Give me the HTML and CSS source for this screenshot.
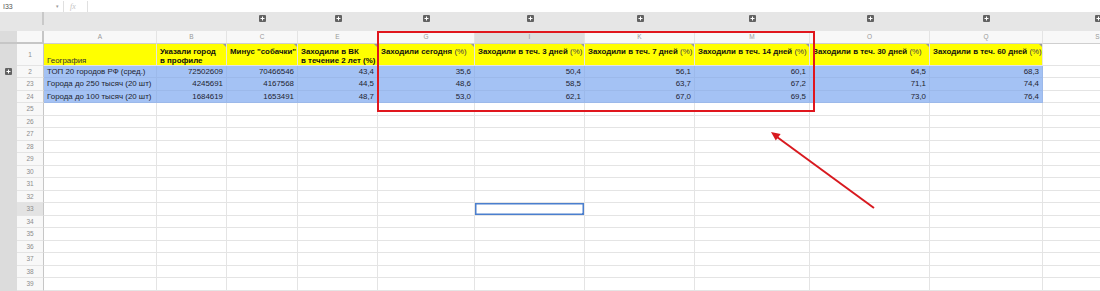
FILE: index.html
```html
<!DOCTYPE html>
<html>
<head>
    <title>Статистика по городам</title>
    <link rel="stylesheet" href="styles.css">
</head>
<body>
<div class="app">
    <div class="formula-bar">
        <div class="name-box">I33</div>
        <div class="name-arrow">&#9662;</div>
        <div class="fx-sep"></div>
        <div class="fx">fx</div>
        <div class="fx-sep"></div>
    </div>

    <div id="sheet">
        <div class="row band">
            <div class="corner"></div>
            <div></div>
            <div></div>
            <div><svg class="plus" width="7" height="7"><rect width="7" height="7" rx="1" fill="#626262"/><path d="M3.5 1.5v4M1.5 3.5h4" stroke="#fff" stroke-width="1"/></svg></div>
            <div><svg class="plus" width="7" height="7"><rect width="7" height="7" rx="1" fill="#626262"/><path d="M3.5 1.5v4M1.5 3.5h4" stroke="#fff" stroke-width="1"/></svg></div>
            <div><svg class="plus" width="7" height="7"><rect width="7" height="7" rx="1" fill="#626262"/><path d="M3.5 1.5v4M1.5 3.5h4" stroke="#fff" stroke-width="1"/></svg></div>
            <div><svg class="plus" width="7" height="7"><rect width="7" height="7" rx="1" fill="#626262"/><path d="M3.5 1.5v4M1.5 3.5h4" stroke="#fff" stroke-width="1"/></svg></div>
            <div><svg class="plus" width="7" height="7"><rect width="7" height="7" rx="1" fill="#626262"/><path d="M3.5 1.5v4M1.5 3.5h4" stroke="#fff" stroke-width="1"/></svg></div>
            <div><svg class="plus" width="7" height="7"><rect width="7" height="7" rx="1" fill="#626262"/><path d="M3.5 1.5v4M1.5 3.5h4" stroke="#fff" stroke-width="1"/></svg></div>
            <div><svg class="plus" width="7" height="7"><rect width="7" height="7" rx="1" fill="#626262"/><path d="M3.5 1.5v4M1.5 3.5h4" stroke="#fff" stroke-width="1"/></svg></div>
            <div><svg class="plus" width="7" height="7"><rect width="7" height="7" rx="1" fill="#626262"/><path d="M3.5 1.5v4M1.5 3.5h4" stroke="#fff" stroke-width="1"/></svg></div>
            <div><svg class="plus" width="7" height="7"><rect width="7" height="7" rx="1" fill="#626262"/><path d="M3.5 1.5v4M1.5 3.5h4" stroke="#fff" stroke-width="1"/></svg></div>
            <div></div>
        </div>

        <div class="row letters">
            <div class="gut"></div>
            <div class="rh"></div>
            <div>A</div>
            <div>B</div>
            <div>C</div>
            <div>E</div>
            <div>G</div>
            <div class="col-sel">I</div>
            <div>K</div>
            <div>M</div>
            <div>O</div>
            <div>Q</div>
            <div>S</div>
        </div>

        <div class="row head">
            <div class="gut"></div>
            <div class="rh">1</div>
            <div class="y geo">География</div>
            <div class="y note">Указали город<br>в профиле</div>
            <div class="y note">Минус "собачки"</div>
            <div class="y note">Заходили в ВК<br>в течение 2 лет (%)</div>
            <div class="y note">Заходили сегодня <span class="pct">(%)</span></div>
            <div class="y note">Заходили в теч. 3 дней <span class="pct">(%)</span></div>
            <div class="y note">Заходили в теч. 7 дней <span class="pct">(%)</span></div>
            <div class="y note">Заходили в теч. 14 дней <span class="pct">(%)</span></div>
            <div class="y note">Заходили в теч. 30 дней <span class="pct">(%)</span></div>
            <div class="y note">Заходили в теч. 60 дней <span class="pct">(%)</span></div>
            <div></div>
        </div>

        <div class="row">
            <div class="gut"><svg class="plus" width="7" height="7"><rect width="7" height="7" rx="1" fill="#626262"/><path d="M3.5 1.5v4M1.5 3.5h4" stroke="#fff" stroke-width="1"/></svg></div>
            <div class="rh">2</div>
            <div class="b">ТОП 20 городов РФ (сред.)</div>
            <div class="b num">72502609</div>
            <div class="b num">70466546</div>
            <div class="b num">43,4</div>
            <div class="b num">35,6</div>
            <div class="b num">50,4</div>
            <div class="b num">56,1</div>
            <div class="b num">60,1</div>
            <div class="b num">64,5</div>
            <div class="b num">68,3</div>
            <div></div>
        </div>

        <div class="row">
            <div class="gut"></div>
            <div class="rh">23</div>
            <div class="b">Города до 250 тысяч (20 шт)</div>
            <div class="b num">4245691</div>
            <div class="b num">4167568</div>
            <div class="b num">44,5</div>
            <div class="b num">48,6</div>
            <div class="b num">58,5</div>
            <div class="b num">63,7</div>
            <div class="b num">67,2</div>
            <div class="b num">71,1</div>
            <div class="b num">74,4</div>
            <div></div>
        </div>

        <div class="row">
            <div class="gut"></div>
            <div class="rh">24</div>
            <div class="b">Города до 100 тысяч (20 шт)</div>
            <div class="b num">1684619</div>
            <div class="b num">1653491</div>
            <div class="b num">48,7</div>
            <div class="b num">53,0</div>
            <div class="b num">62,1</div>
            <div class="b num">67,0</div>
            <div class="b num">69,5</div>
            <div class="b num">73,0</div>
            <div class="b num">76,4</div>
            <div></div>
        </div>
    </div>

    <div class="highlight"></div>
    <svg class="arrow" width="1100" height="291">
        <line x1="874" y1="208" x2="777" y2="137" stroke="#d8191f" stroke-width="2"/>
        <polygon points="771,132 780.6,134.1 775.8,140.5" fill="#d8191f"/>
    </svg>
</div>

<script>
    const sheet = document.getElementById("sheet");

    // empty rows 25..39, cell I33 is the active one
    for (let r = 25; r <= 39; r++) {
        const row = document.createElement("div");
        row.className = "row";
        let html = '<div class="gut"></div>';
        html += '<div class="rh' + (r === 33 ? ' row-sel' : '') + '">' + r + '</div>';
        for (let c = 0; c < 11; c++) {
            html += (r === 33 && c === 5) ? '<div class="sel"></div>' : '<div></div>';
        }
        row.innerHTML = html;
        sheet.appendChild(row);
    }
</script>
</body>
</html>
```

FILE: styles.css
```css
body {
    margin: 0;
    font-family: "Liberation Sans", Arial, sans-serif;
    background-color: #fff;
    overflow: hidden;
}

.app {
    position: relative;
    width: 1100px;
    height: 291px;
    overflow: hidden;
}

.formula-bar {
    height: 12px;
    display: flex;
    align-items: center;
    font-size: 7px;
    color: #555;
}

.name-box {
    width: 53px;
    padding-left: 3px;
}

.name-arrow {
    width: 7px;
    font-size: 5px;
    color: #999;
}

.fx-sep {
    width: 1px;
    height: 11px;
    background-color: #e0e0e0;
}

.fx {
    width: 17px;
    padding-left: 6px;
    font-family: "Liberation Serif", serif;
    font-style: italic;
    font-size: 8px;
    color: #c4c4c4;
}

#sheet {
    width: 1200px;
}

.row {
    display: grid;
    grid-template-columns: 17px 27px 113px 70px 71px 80px 97px 110px 110px 115px 120px 113px 110px;
    height: 12.5px;
}

.row > div {
    box-sizing: border-box;
    border-right: 1px solid #e4e4e4;
    border-bottom: 1px solid #e4e4e4;
    padding: 0 3px;
    overflow: hidden;
    white-space: nowrap;
    font-size: 7.9px;
    line-height: 11.5px;
    color: #222;
}

.row > .gut {
    background-color: #dcdcdc;
    border: none;
    padding: 0;
    display: flex;
    align-items: center;
    justify-content: center;
}

.row > .rh {
    background-color: #f8f8f8;
    border-right: 1px solid #c6c6c6;
    padding: 0;
    text-align: center;
    font-size: 6.5px;
    color: #8c8c8c;
}

.row > .row-sel {
    background-color: #e3e3e3;
}

/* group band with the + buttons */
.band {
    height: 19px;
    background-color: #e6e6e6;
}

.band > div {
    display: flex;
    align-items: center;
    justify-content: center;
}

.row.band > div {
    border: none;
}

.row.band > .corner {
    grid-column: 1 / 3;
    border-right: 2px solid #c9c9c9;
}

/* column letters */
.letters {
    height: 13px;
}

.letters > div {
    background-color: #f8f8f8;
    text-align: center;
    font-size: 6.5px;
    line-height: 12px;
    color: #999;
}

.row.letters > div {
    border-bottom: 1px solid #cfcfcf;
}

.row.letters > .gut {
    border-bottom: 2px solid #c6c6c6;
}

.row.letters > .rh {
    border-right: 2px solid #c6c6c6;
    border-bottom: 2px solid #c6c6c6;
}

.row.letters > .col-sel {
    background-color: #dedede;
}

/* header row */
.head {
    height: 21.7px;
}

.row.head > div {
    line-height: 9px;
    padding-top: 3px;
}

.row.head > .rh {
    padding-top: 0;
    line-height: 21px;
}

.row > .y {
    position: relative;
    background-color: #ffff00;
    font-weight: bold;
    white-space: nowrap;
    color: #111;
}

.row.head > .geo {
    font-weight: normal;
    padding-top: 12px;
    color: #333;
}

.pct {
    font-weight: normal;
    color: #444;
}

.note::after {
    content: "";
    position: absolute;
    top: 0;
    right: 0;
    border-top: 3px solid #9a9a9a;
    border-left: 3px solid transparent;
}

/* blue data rows */
.row > .b {
    background-color: #a4c2f4;
    border-right-color: #9cb9ea;
    border-bottom-color: #9cb9ea;
    color: #1e2430;
}

.num {
    text-align: right;
}

.row > .sel {
    position: relative;
    box-shadow: inset 0 0 0 1.5px #4b7fce;
}

.sel::after {
    content: "";
    position: absolute;
    right: -2px;
    bottom: -2px;
    width: 4px;
    height: 4px;
    background-color: #4b7fce;
}

/* annotations drawn over the sheet */
.highlight {
    position: absolute;
    left: 377px;
    top: 31px;
    width: 438px;
    height: 81px;
    box-sizing: border-box;
    border: 2px solid #e0161d;
}

.arrow {
    position: absolute;
    left: 0;
    top: 0;
}
```
